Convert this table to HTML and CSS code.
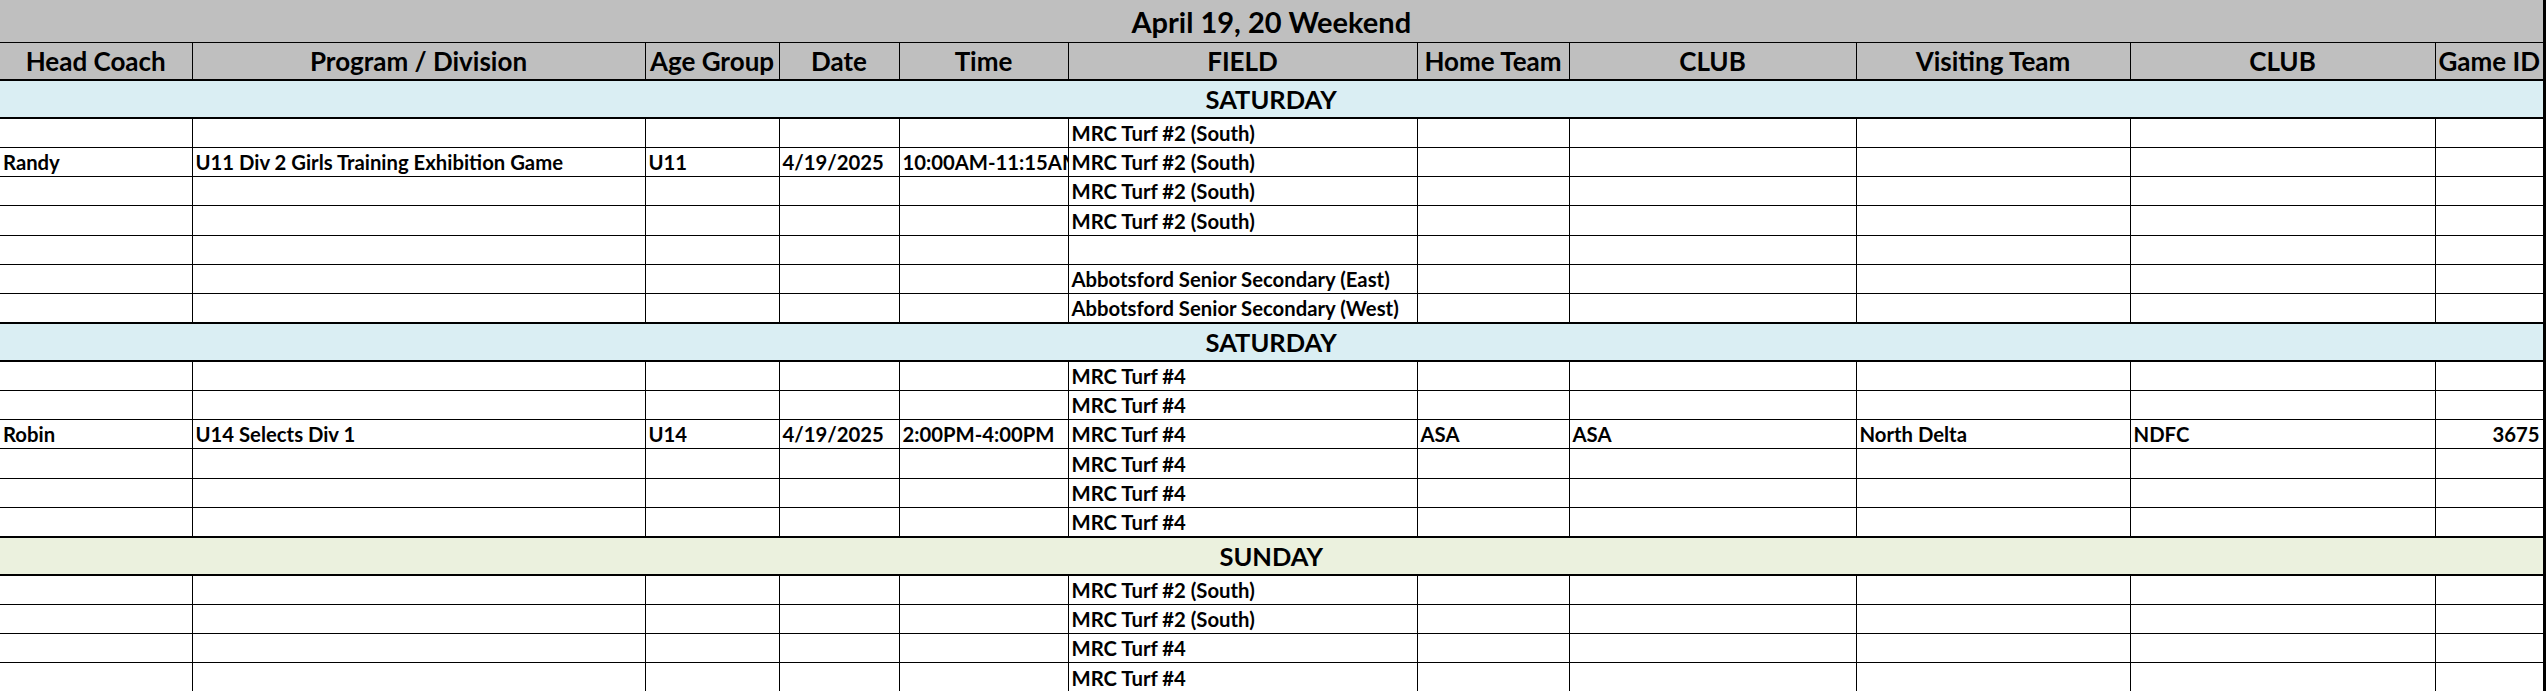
FILE: index.html
```html
<!DOCTYPE html>
<html>
<head>
<meta charset="utf-8">
<link rel="stylesheet" href="styles.css">
</head>
<body>
<table class="sheet">
  <colgroup>
    <col class="c1"><col class="c2"><col class="c3"><col class="c4"><col class="c5"><col class="c6"><col class="c7"><col class="c8"><col class="c9"><col class="c10"><col class="c11">
  </colgroup>
  <tr class="title"><td colspan="11">April 19, 20 Weekend</td></tr>
  <tr class="head">
    <th>Head Coach</th><th>Program / Division</th><th>Age Group</th><th>Date</th><th>Time</th><th>FIELD</th><th>Home Team</th><th>CLUB</th><th>Visiting Team</th><th>CLUB</th><th>Game ID</th>
  </tr>
  <tr class="band sat"><td colspan="11">SATURDAY</td></tr>
  <tr class="row"><td></td><td></td><td></td><td></td><td></td><td>MRC Turf #2 (South)</td><td></td><td></td><td></td><td></td><td></td></tr>
  <tr class="row"><td>Randy</td><td>U11 Div 2 Girls Training Exhibition Game</td><td>U11</td><td>4/19/2025</td><td class="clip">10:00AM-11:15AM</td><td>MRC Turf #2 (South)</td><td></td><td></td><td></td><td></td><td></td></tr>
  <tr class="row"><td></td><td></td><td></td><td></td><td></td><td>MRC Turf #2 (South)</td><td></td><td></td><td></td><td></td><td></td></tr>
  <tr class="row"><td></td><td></td><td></td><td></td><td></td><td>MRC Turf #2 (South)</td><td></td><td></td><td></td><td></td><td></td></tr>
  <tr class="row"><td></td><td></td><td></td><td></td><td></td><td></td><td></td><td></td><td></td><td></td><td></td></tr>
  <tr class="row"><td></td><td></td><td></td><td></td><td></td><td>Abbotsford Senior Secondary (East)</td><td></td><td></td><td></td><td></td><td></td></tr>
  <tr class="row"><td></td><td></td><td></td><td></td><td></td><td>Abbotsford Senior Secondary (West)</td><td></td><td></td><td></td><td></td><td></td></tr>
  <tr class="band sat"><td colspan="11">SATURDAY</td></tr>
  <tr class="row"><td></td><td></td><td></td><td></td><td></td><td>MRC Turf #4</td><td></td><td></td><td></td><td></td><td></td></tr>
  <tr class="row"><td></td><td></td><td></td><td></td><td></td><td>MRC Turf #4</td><td></td><td></td><td></td><td></td><td></td></tr>
  <tr class="row"><td>Robin</td><td>U14 Selects Div 1</td><td>U14</td><td>4/19/2025</td><td class="clip">2:00PM-4:00PM</td><td>MRC Turf #4</td><td>ASA</td><td>ASA</td><td>North Delta</td><td>NDFC</td><td class="num">3675</td></tr>
  <tr class="row"><td></td><td></td><td></td><td></td><td></td><td>MRC Turf #4</td><td></td><td></td><td></td><td></td><td></td></tr>
  <tr class="row"><td></td><td></td><td></td><td></td><td></td><td>MRC Turf #4</td><td></td><td></td><td></td><td></td><td></td></tr>
  <tr class="row"><td></td><td></td><td></td><td></td><td></td><td>MRC Turf #4</td><td></td><td></td><td></td><td></td><td></td></tr>
  <tr class="band sun"><td colspan="11">SUNDAY</td></tr>
  <tr class="row"><td></td><td></td><td></td><td></td><td></td><td>MRC Turf #2 (South)</td><td></td><td></td><td></td><td></td><td></td></tr>
  <tr class="row"><td></td><td></td><td></td><td></td><td></td><td>MRC Turf #2 (South)</td><td></td><td></td><td></td><td></td><td></td></tr>
  <tr class="row"><td></td><td></td><td></td><td></td><td></td><td>MRC Turf #4</td><td></td><td></td><td></td><td></td><td></td></tr>
  <tr class="row"><td></td><td></td><td></td><td></td><td></td><td>MRC Turf #4</td><td></td><td></td><td></td><td></td><td></td></tr>
</table>
</body>
</html>
```

FILE: styles.css
```css
html, body {
  margin: 0;
  padding: 0;
  background: #ffffff;
}

.sheet {
  border-collapse: collapse;
  table-layout: fixed;
  width: 2544px;
  font-family: Lato, "Liberation Sans", sans-serif;
  font-weight: 700;
  color: #000;
  border-right: 3px solid #000;
}

.c1 { width: 192px; }
.c2 { width: 453px; }
.c3 { width: 134px; }
.c4 { width: 120px; }
.c5 { width: 169px; }
.c6 { width: 349px; }
.c7 { width: 152px; }
.c8 { width: 287px; }
.c9 { width: 274px; }
.c10 { width: 305px; }
.c11 { width: 109px; }

.sheet td, .sheet th {
  padding: 0 3px 2px 3px;
  white-space: nowrap;
  overflow: hidden;
  vertical-align: bottom;
}

.title { height: 42.5px; background: #bfbfbf; }
.title td {
  text-align: center;
  font-size: 29px;
  line-height: 34px;
  padding-bottom: 3px;
  border-bottom: 1px solid #000;
}

.head { height: 37.5px; background: #bfbfbf; }
.head th {
  font-size: 26px;
  font-weight: 700;
  line-height: 30px;
  padding-bottom: 3px;
  text-align: center;
  border-left: 1px solid #000;
  border-bottom: 2px solid #000;
}
.head th:first-child { border-left: none; }

.band { height: 38px; }
.band td {
  text-align: center;
  font-size: 25.5px;
  line-height: 30px;
  padding-bottom: 3px;
  border-top: 2px solid #000;
  border-bottom: 2px solid #000;
}
.sat { background: #daeef3; }
.sun { background: #ebf1de; }

.row { height: 29.3px; }
.row td {
  font-size: 20.3px;
  line-height: 24px;
  text-align: left;
  border-left: 1px solid #000;
  border-bottom: 1px solid #000;
  background: #fff;
}
.row td:first-child { border-left: none; }
.row td.num { text-align: right; }
.row td.clip { text-overflow: clip; }
```
